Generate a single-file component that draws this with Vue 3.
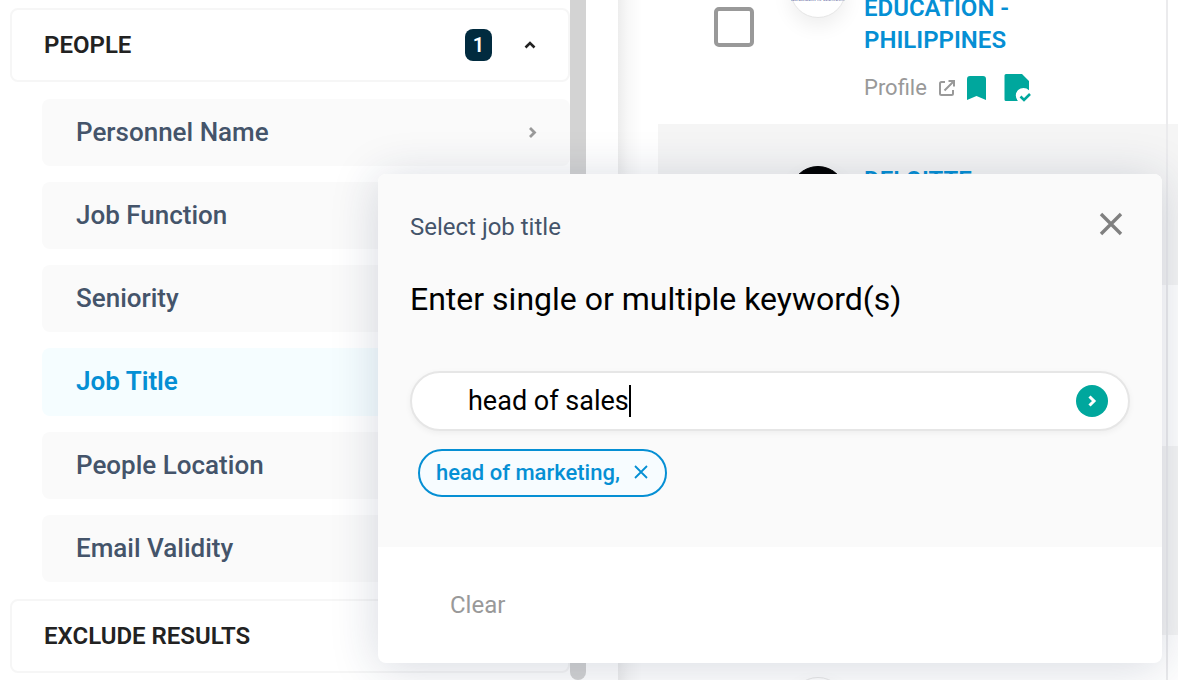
<script setup>
import { ref } from 'vue'

const filters = ['Personnel Name', 'Job Function', 'Seniority', 'Job Title', 'People Location', 'Email Validity']
const active = ref('Job Title')
const keyword = ref('head of sales')
const chips = ref(['head of marketing,'])

const results = [
  { id: 1, lines: ['EDUCATION -', 'PHILIPPINES'], logo: 'seal', size: 'tall', profile: true },
  { id: 2, lines: ['DELOITTE'], logo: 'dark', size: 'short' },
  { id: 3, lines: [], logo: 'plain', size: 'short' },
  { id: 4, lines: [], logo: 'plain', size: 'medium' },
  { id: 5, lines: [], logo: 'plain', size: 'short' },
]
</script>

<template>
  <div class="page">
    <aside class="sidebar">
      <button class="group" type="button">
        <span>PEOPLE</span>
        <span class="count">1</span>
        <svg class="chev" width="16" height="16" viewBox="0 0 16 16"><path d="M3.500 10.500 8 6l4.500 4.500" fill="none" stroke="#222" stroke-width="2.600" /></svg>
      </button>
      <nav class="filters">
        <button
          v-for="f in filters"
          :key="f"
          type="button"
          :class="['filter', { active: f === active }]"
          @click="active = f"
        >
          <span>{{ f }}</span>
          <svg width="12" height="16" viewBox="0 0 12 16"><path d="M3 4 7.500 8.500 3 13" fill="none" stroke="#999" stroke-width="2.800" /></svg>
        </button>
      </nav>
      <button class="group" type="button"><span>EXCLUDE RESULTS</span></button>
    </aside>
    <div class="scrollbar"></div>

    <main class="results">
      <ul class="list">
        <li v-for="r in results" :key="r.id" :class="['row', r.size]">
          <input class="check" type="checkbox" :aria-label="'Select result ' + r.id" />
          <span :class="['avatar', r.logo]">
            <svg v-if="r.logo === 'seal'" width="54" height="54" viewBox="0 0 54 54">
              <text x="27" y="38" text-anchor="middle" class="seal-text">DEPARTMENT OF EDUCATION</text>
            </svg>
          </span>
          <div class="info">
            <a class="name" href="#"><span v-for="l in r.lines" :key="l">{{ l }}</span></a>
            <div v-if="r.profile" class="meta">
              <a class="profile" href="#">Profile
                <svg width="18" height="18" viewBox="0 0 18 18" fill="none" stroke="#999" stroke-width="2"><path d="M7 3H3.500Q2 3 2 4.500v10Q2 16 3.500 16h10q1.500 0 1.500-1.500V11M6.500 11.500 15.500 2.500M10.500 2H16v5.500" /></svg>
              </a>
              <button class="icon bookmark" type="button" aria-label="Bookmark">
                <svg width="20" height="24" viewBox="0 0 20 24"><path d="M3 0h13q3 0 3 3v21l-9.500-4L0 24V3q0-3 3-3z" fill="#00a79d" /></svg>
              </button>
              <button class="icon" type="button" aria-label="Saved to list">
                <svg width="28" height="28" viewBox="0 0 28 28">
                  <path d="M2 0h16l7 7v9.200a7.500 7.500 0 0 0-11 10.800H2q-1.500 0-1.500-1.500v-24Q.5 0 2 0z" fill="#00a79d" />
                  <path d="m16.500 22.500 3.500 3.500 6-6" fill="none" stroke="#00a79d" stroke-width="2.600" />
                </svg>
              </button>
            </div>
          </div>
        </li>
      </ul>
    </main>

    <section class="dialog" role="dialog" aria-labelledby="dialog-title">
      <div class="body">
        <header class="head">
          <h2 id="dialog-title">Select job title</h2>
          <button class="icon" type="button" aria-label="Close">
            <svg width="24" height="24" viewBox="0 0 24 24"><path d="m2 2 20 20M22 2 2 22" stroke="#808080" stroke-width="3.400" /></svg>
          </button>
        </header>
        <label class="prompt" for="keyword">Enter single or multiple keyword(s)</label>
        <div class="field">
          <input id="keyword" v-model="keyword" type="text" />
          <span class="caret"></span>
          <button class="send" type="button" aria-label="Add keyword">
            <svg width="12" height="14" viewBox="0 0 12 14"><path d="m3.500 2.500 4.500 4.500-4.500 4.500" fill="none" stroke="#fff" stroke-width="3" /></svg>
          </button>
        </div>
        <div class="chips">
          <span v-for="(c, i) in chips" :key="c" class="chip">
            {{ c }}
            <button class="icon" type="button" :aria-label="'Remove ' + c" @click="chips.splice(i, 1)">
              <svg width="14" height="14" viewBox="0 0 14 14"><path d="m1 1 12 12M13 1 1 13" stroke="#058fd4" stroke-width="1.800" /></svg>
            </button>
          </span>
        </div>
      </div>
      <footer class="foot"><button class="clear" type="button">Clear</button></footer>
    </section>
  </div>
</template>

<style>
html,
body {
  background: #fff;
}
</style>

<style scoped>
* {
  box-sizing: border-box;
}
.page {
  position: relative;
  display: flex;
  height: 100vh;
  overflow: hidden;
  font-family: Roboto, 'Liberation Sans', sans-serif;
}
button {
  font: inherit;
  border: 0;
  background: none;
  padding: 0;
  text-align: left;
}
svg {
  display: block;
}
.sidebar {
  flex: 0 0 570px;
  padding: 8px 0 0 10px;
}
.group {
  display: flex;
  align-items: center;
  width: 100%;
  height: 74px;
  padding: 0 30px 0 32px;
  border: 2px solid #f6f6f6;
  border-radius: 8px;
  background: #fff;
  color: #222;
  font-size: 24px;
  font-weight: 600;
}
.count {
  margin-left: auto;
  width: 27px;
  height: 32px;
  border-radius: 8px;
  background: #012b3f;
  color: #fff;
  font-size: 20px;
  line-height: 32px;
  text-align: center;
}
.chev {
  margin-left: 30px;
}
.filters {
  display: flex;
  flex-direction: column;
  gap: 16px;
  padding: 17px 0 17px 32px;
}
.filter {
  display: flex;
  align-items: center;
  justify-content: space-between;
  height: 67px;
  padding: 0 31px 2px 34px;
  border-radius: 8px;
  background: #fafafa;
  color: #44546a;
  font-size: 26px;
  font-weight: 500;
}
.filter.active {
  height: 68px;
  background: #f5fdff;
  color: #058fd4;
  font-weight: 600;
}
.scrollbar {
  flex: 0 0 16px;
  background: #d3d3d3;
  border-radius: 0 0 8px 8px;
}
.results {
  flex: 1;
  position: relative;
  margin-left: 32px;
  padding-left: 40px;
  background: linear-gradient(90deg, #ededed, #f8f8f8 10px, #fff 24px);
}
.results::after {
  content: '';
  position: absolute;
  top: 0;
  bottom: 0;
  right: 10px;
  width: 2px;
  background: #ebebed;
}
.list {
  margin: -80px 0 0;
  padding: 0;
  list-style: none;
}
.row {
  display: flex;
  padding: 40px 32px 20px 56px;
  height: 161px;
}
.row.tall {
  height: 204px;
}
.row.medium {
  height: 189px;
}
.row:nth-child(even) {
  background: #f5f5f5;
}
.check {
  appearance: none;
  flex: none;
  align-self: center;
  width: 40px;
  height: 40px;
  margin: -10px 0 0;
  border: 4px solid #999;
  border-radius: 5px;
  background: #fff;
}
.avatar {
  flex: none;
  width: 56px;
  height: 56px;
  margin: 2px 18px 0 36px;
  border: 1px solid #e6e6e6;
  border-radius: 50%;
  background: #fff;
  box-shadow: 0 8px 20px rgba(0, 0, 0, 0.07);
}
.avatar.dark {
  border-color: #000;
  background: #000;
}
.seal-text {
  font-family: 'Liberation Serif', serif;
  font-size: 4px;
  fill: #1e2f7d;
}
.name {
  display: flex;
  flex-direction: column;
  color: #058fd4;
  font-size: 24px;
  font-weight: 600;
  line-height: 32px;
  text-decoration: none;
}
.tall .name {
  justify-content: flex-end;
  height: 96px;
}
.meta {
  display: flex;
  align-items: center;
  height: 32px;
  margin-top: 16px;
}
.profile {
  display: flex;
  align-items: center;
  gap: 11px;
  color: #999;
  font-size: 22px;
  line-height: 24px;
  text-decoration: none;
}
.bookmark {
  margin: 0 17px 0 11px;
}
.dialog {
  position: absolute;
  top: 174px;
  left: 378px;
  right: 16px;
  border-radius: 8px;
  background: #fff;
  box-shadow: 0 4px 48px rgba(30, 45, 85, 0.18);
}
.body {
  padding: 32px 32px 50px;
  border-radius: 8px 8px 0 0;
  background: #fafafa;
}
.head {
  display: flex;
  justify-content: space-between;
  padding-right: 7px;
}
.head h2 {
  margin: 0;
  padding-top: 5px;
  color: #44546a;
  font-size: 24px;
  font-weight: 400;
  line-height: 32px;
}
.head .icon {
  align-self: flex-start;
  padding-top: 6px;
}
.prompt {
  display: block;
  margin-top: 36px;
  color: #000;
  font-size: 32px;
  line-height: 40px;
}
.field {
  display: flex;
  align-items: center;
  height: 60px;
  margin-top: 52px;
  padding: 0 20px 0 56px;
  border: 2px solid #e6e6e6;
  border-radius: 30px;
  background: #fff;
  box-shadow: 0 2px 6px rgba(0, 0, 0, 0.05);
}
.field input {
  field-sizing: content;
  padding: 0;
  border: 0;
  outline: 0;
  background: none;
  color: #000;
  font: 400 27px/32px Roboto, 'Liberation Sans', sans-serif;
}
.caret {
  width: 2px;
  height: 32px;
  background: #000;
}
.send {
  display: flex;
  align-items: center;
  justify-content: center;
  width: 32px;
  height: 32px;
  margin-left: auto;
  border-radius: 50%;
  background: #00a79d;
}
.chips {
  display: flex;
  padding: 18px 8px 0;
}
.chip {
  display: flex;
  align-items: center;
  gap: 14px;
  height: 48px;
  padding: 0 17px 2px 16px;
  border: 2px solid #058fd4;
  border-radius: 24px;
  background: #f7fcff;
  color: #058fd4;
  font-size: 22px;
  font-weight: 500;
}
.foot {
  padding: 42px 72px;
}
.clear {
  color: #999;
  font-size: 24px;
  line-height: 32px;
}
</style>
